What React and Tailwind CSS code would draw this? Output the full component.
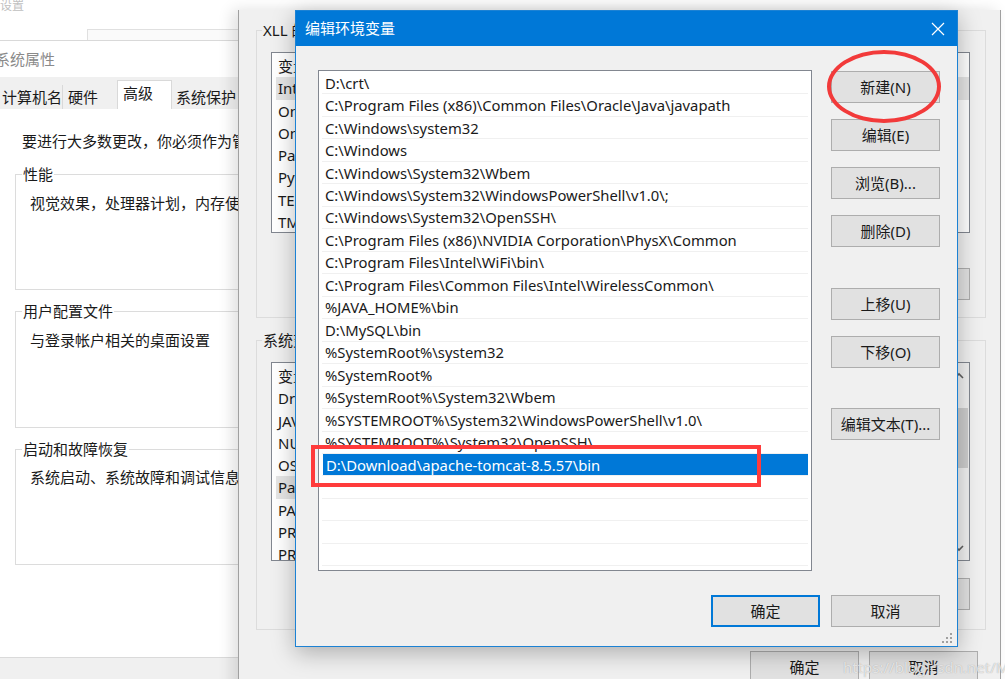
import React from 'react';

const FONT = { fontFamily: '"Segoe UI", "Noto Sans", "Noto Sans CJK SC", sans-serif' };

const paths = [
  'D:\\crt\\',
  'C:\\Program Files (x86)\\Common Files\\Oracle\\Java\\javapath',
  'C:\\Windows\\system32',
  'C:\\Windows',
  'C:\\Windows\\System32\\Wbem',
  'C:\\Windows\\System32\\WindowsPowerShell\\v1.0\\;',
  'C:\\Windows\\System32\\OpenSSH\\',
  'C:\\Program Files (x86)\\NVIDIA Corporation\\PhysX\\Common',
  'C:\\Program Files\\Intel\\WiFi\\bin\\',
  'C:\\Program Files\\Common Files\\Intel\\WirelessCommon\\',
  '%JAVA_HOME%\\bin',
  'D:\\MySQL\\bin',
  '%SystemRoot%\\system32',
  '%SystemRoot%',
  '%SystemRoot%\\System32\\Wbem',
  '%SYSTEMROOT%\\System32\\WindowsPowerShell\\v1.0\\',
  '%SYSTEMROOT%\\System32\\OpenSSH\\',
];

const userVars = ['变量', 'Int', 'On', 'On', 'Pat', 'Pyt', 'TEI', 'TM'];
const sysVars = ['变量', 'Dri', 'JAV', 'NU', 'OS', 'Pat', 'PA', 'PR', 'PR'];

const WinButton = ({ children, primary, className = '' }) => (
  <div
    className={`flex items-center justify-center h-[32px] w-[109px] bg-[#e1e1e1] text-[15px] text-[#1a1a1a] ${
      primary ? 'border-2 border-[#0078d7]' : 'border border-[#adadad]'
    } ${className}`}
  >
    {children}
  </div>
);

const GroupBox = ({ label, children, className = '' }) => (
  <div className={`relative border border-[#dcdcdc] ${className}`}>
    <span className="absolute -top-[11px] left-[6px] bg-white px-[1px] text-[15px] leading-[20px] text-[#1a1a1a] whitespace-nowrap">
      {label}
    </span>
    {children}
  </div>
);

function SystemProperties() {
  return (
    <div className="absolute left-0 top-[40px] w-[300px] h-[639px] bg-white border-t border-[#d9d9d9] flex flex-col">
      <div className="h-[36px] flex items-center text-[15px] text-[#8a8a8a] -ml-[5px]">系统属性</div>
      <div className="h-[32px] bg-[#f0f0f0] flex items-end text-[15px] text-[#1a1a1a]">
        <div className="h-[24px] w-[63px] flex items-center pl-[2px] border-r border-[#d9d9d9]">计算机名</div>
        <div className="h-[24px] w-[54px] flex items-center pl-[5px]">硬件</div>
        <div className="h-[29px] w-[55px] flex items-start pt-[1px] pl-[5px] bg-white border-x border-t border-[#d9d9d9]">高级</div>
        <div className="h-[24px] w-[80px] flex items-center pl-[4px]">系统保护</div>
      </div>
      <div className="flex-1 flex flex-col px-[15px] pt-[21px] text-[15px] text-[#1a1a1a]">
        <div className="pl-[7px] leading-[22px] whitespace-nowrap">要进行大多数更改，你必须作为管理员登录。</div>
        <GroupBox label="性能" className="mt-[22px] h-[116px]">
          <div className="pl-[14px] pt-[17px] leading-[22px] whitespace-nowrap">视觉效果，处理器计划，内存使用，以及虚拟内存</div>
        </GroupBox>
        <GroupBox label="用户配置文件" className="mt-[21px] h-[117px]">
          <div className="pl-[14px] pt-[17px] leading-[22px] whitespace-nowrap">与登录帐户相关的桌面设置</div>
        </GroupBox>
        <GroupBox label="启动和故障恢复" className="mt-[21px] h-[116px]">
          <div className="pl-[14px] pt-[16px] leading-[22px] whitespace-nowrap">系统启动、系统故障和调试信息</div>
        </GroupBox>
        <div className="flex-1" />
      </div>
      <div className="h-[22px] bg-[#f0f0f0] border-t border-[#dadada]" />
    </div>
  );
}

const VarList = ({ items, highlight, className = '' }) => (
  <div className={`bg-white border border-[#828790] overflow-hidden flex flex-col pl-[4px] pt-[2px] ${className}`}>
    {items.map((v, i) => (
      <div
        key={i}
        className={`h-[22.3px] shrink-0 flex items-center px-[2px] text-[15px] text-[#1a1a1a] ${
          i === highlight ? 'bg-[#e5e5e5]' : ''
        }`}
      >
        {v}
      </div>
    ))}
  </div>
);

function EnvWindow() {
  return (
    <div className="absolute left-[238px] top-[10px] w-[763px] h-[700px] bg-[#f0f0f0] border-l border-r border-[#a0a0a0] shadow-[-6px_0_14px_rgba(0,0,0,0.12)] flex flex-col pl-[17px] pr-[14px] pt-[20px]">
      <div className="relative h-[288px] border border-[#dcdcdc] pl-[14px] pr-[15px] pt-[21px]">
        <span className="absolute -top-[11px] left-[5px] bg-[#f0f0f0] px-[1px] text-[15px] leading-[20px] text-[#1a1a1a]">XLL 的用户变量(U)</span>
        <VarList items={userVars} highlight={1} className="h-[181px]" />
        <div className="flex justify-end gap-[10px] mt-[35px]">
          <div className="h-[32px] w-[109px] bg-[#e1e1e1] border border-[#adadad]" />
          <div className="h-[32px] w-[109px] bg-[#e1e1e1] border border-[#adadad]" />
          <div className="h-[32px] w-[109px] bg-[#e1e1e1] border border-[#adadad]" />
        </div>
      </div>
      <div className="relative mt-[22px] h-[290px] border border-[#dcdcdc] pl-[14px] pr-[15px] pt-[21px]">
        <span className="absolute -top-[11px] left-[5px] bg-[#f0f0f0] px-[1px] text-[15px] leading-[20px] text-[#1a1a1a]">系统变量(S)</span>
        <div className="relative">
          <VarList items={sysVars} highlight={5} className="h-[199px]" />
          <div className="absolute right-[1px] top-[1px] bottom-[1px] w-[21px] bg-[#f0f0f0] flex flex-col items-center">
            <svg width="12" height="22" viewBox="0 0 12 22" className="mt-[1px]">
              <path d="M2 14 L6 10 L10 14" stroke="#606060" strokeWidth="1.6" fill="none" />
            </svg>
            <div className="mt-[22px] w-[19px] h-[60px] bg-[#cdcdcd]" />
            <div className="flex-1" />
            <svg width="12" height="22" viewBox="0 0 12 22" className="mb-[1px]">
              <path d="M2 9 L6 13 L10 9" stroke="#606060" strokeWidth="1.6" fill="none" />
            </svg>
          </div>
        </div>
        <div className="flex justify-end gap-[10px] mt-[17px]">
          <div className="h-[32px] w-[109px] bg-[#e1e1e1] border border-[#adadad]" />
          <div className="h-[32px] w-[109px] bg-[#e1e1e1] border border-[#adadad]" />
          <div className="h-[32px] w-[109px] bg-[#e1e1e1] border border-[#adadad]" />
        </div>
      </div>
      <div className="flex justify-end gap-[10px] mt-[21px] pr-[8px]">
        <WinButton>确定</WinButton>
        <WinButton>取消</WinButton>
      </div>
    </div>
  );
}

function EditDialog() {
  return (
    <div className="absolute left-[295px] top-[10px] w-[663px] h-[637px] bg-[#f0f0f0] border border-[#1c82d4] shadow-[0_6px_22px_rgba(0,0,0,0.28)] flex flex-col">
      <div className="h-[35px] bg-[#0078d7] flex items-center justify-between pl-[9px] pr-[12px] text-white shrink-0">
        <span className="text-[15px]">编辑环境变量</span>
        <svg width="14" height="14" viewBox="0 0 14 14">
          <path d="M1 1 L13 13 M13 1 L1 13" stroke="#ffffff" strokeWidth="1.2" />
        </svg>
      </div>
      <div className="flex-1 flex flex-col pl-[22px] pr-[17px] pt-[24px]">
        <div className="flex gap-[19px]">
          <div className="w-[494px] h-[501px] bg-white border border-[#828790] flex flex-col pt-[1px] px-[3px] overflow-hidden">
            {paths.map((p, i) => (
              <div key={i} className="h-[22.47px] shrink-0 flex items-center pl-[3px] border-b border-[#f0f0f0] text-[14.8px] text-[#1a1a1a] whitespace-nowrap">
                {p}
              </div>
            ))}
            <div className="h-[22.47px] shrink-0 flex items-center border-b border-[#f0f0f0] bg-[#0078d7]">
              <div className="h-full flex items-center pl-[3px] pr-[2px] border-l border-white text-[14.8px] text-white whitespace-nowrap">
                D:\Download\apache-tomcat-8.5.57\bin
              </div>
            </div>
            {[0, 1, 2, 3].map((i) => (
              <div key={i} className="h-[22.47px] shrink-0 border-b border-[#f0f0f0]" />
            ))}
          </div>
          <div className="flex flex-col pt-[1px]">
            <WinButton>新建(N)</WinButton>
            <WinButton className="mt-[16px]">编辑(E)</WinButton>
            <WinButton className="mt-[16px]">浏览(B)...</WinButton>
            <WinButton className="mt-[16px]">删除(D)</WinButton>
            <WinButton className="mt-[41px]">上移(U)</WinButton>
            <WinButton className="mt-[16px]">下移(O)</WinButton>
            <WinButton className="mt-[40px]">编辑文本(T)...</WinButton>
          </div>
        </div>
        <div className="flex justify-end gap-[11px] mt-[24px]">
          <WinButton primary>确定</WinButton>
          <WinButton>取消</WinButton>
        </div>
        <div className="flex-1" />
        <div className="self-end -mr-[12px] mb-[3px]">
          <svg width="10" height="10" viewBox="0 0 10 10">
            <g fill="#a0a0a0">
              <rect x="8" y="0" width="2" height="2" />
              <rect x="4" y="4" width="2" height="2" />
              <rect x="8" y="4" width="2" height="2" />
              <rect x="0" y="8" width="2" height="2" />
              <rect x="4" y="8" width="2" height="2" />
              <rect x="8" y="8" width="2" height="2" />
            </g>
          </svg>
        </div>
      </div>
    </div>
  );
}

export default function App() {
  return (
    <div className="relative w-[1005px] h-[679px] overflow-hidden bg-white" style={FONT}>
      <div className="absolute left-0 top-0 text-[12px] text-[#c0c0c0] leading-[12px]">设置</div>
      <div className="absolute left-[87px] top-[29px] w-[200px] h-[20px] border-t border-l border-[#e0e0e0] bg-[#fafafa]" />
      <SystemProperties />
      <EnvWindow />
      <EditDialog />
      {/* annotations */}
      <div className="absolute left-[311px] top-[445px] w-[450px] h-[42px] border-[4px] border-[#ff3b3b]" />
      <div className="absolute left-[827px] top-[50px] w-[114px] h-[73px] rounded-[50%] border-[4px] border-[#f23a3a]" />
      <div className="absolute left-[843px] top-[656px] text-[15px] text-white/70 [text-shadow:0_0_1px_#9a9a9a] whitespace-nowrap">
        https://blog.csdn.net/Manta_s
      </div>
    </div>
  );
}
